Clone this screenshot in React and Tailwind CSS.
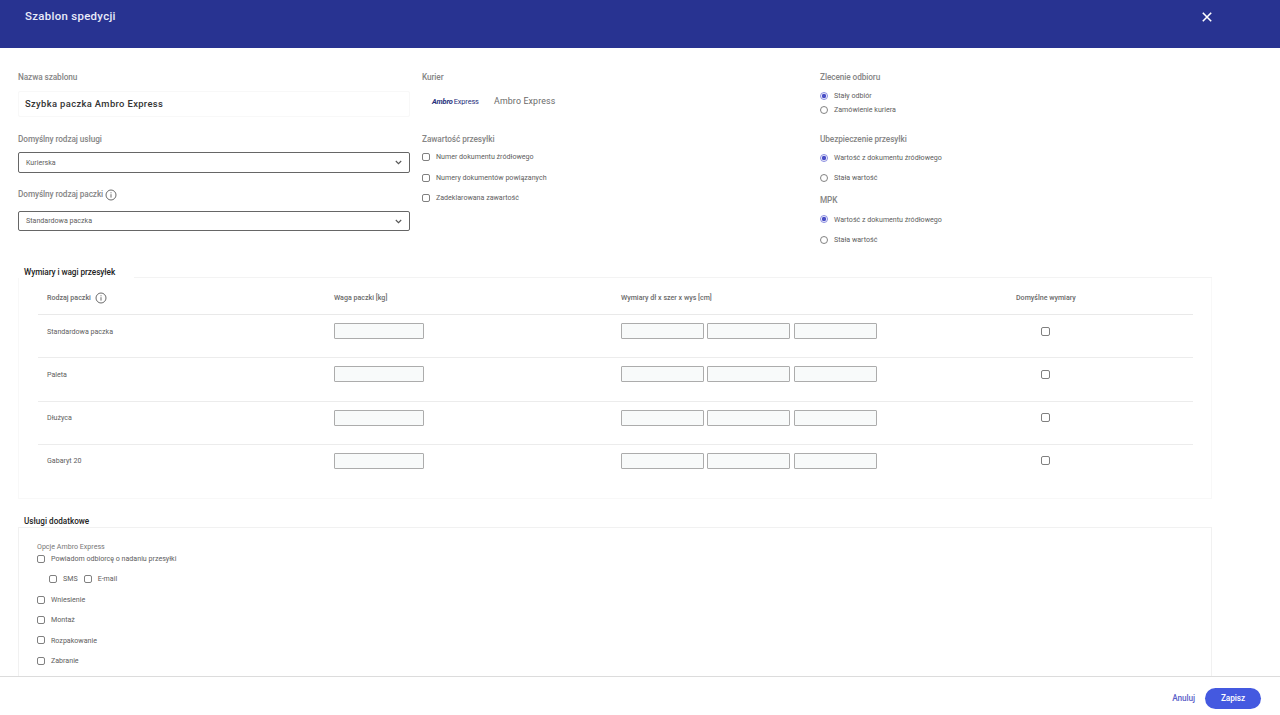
import React from "react";

const Check = ({ className = "size-2" }) => (
  <span className={`${className} shrink-0 rounded-[2px] border border-[#808080] bg-white`} />
);

const Radio = ({ on }) => (
  <svg className="size-2 shrink-0" viewBox="0 0 8 8">
    <circle cx="4" cy="4" r="3.5" fill="#fff" stroke={on ? "#7a7edb" : "#757575"} strokeWidth="0.9" />
    {on && <circle cx="4" cy="4" r="2.2" fill="#4a4fc6" />}
  </svg>
);

const Info = () => (
  <svg className="size-3 shrink-0" viewBox="0 0 12 12" fill="none" stroke="#5a5a5a">
    <circle cx="6" cy="6" r="5" strokeWidth="0.9" />
    <path d="M6 5.2V8.6M6 3.3V4.3" strokeWidth="0.9" />
  </svg>
);

const Label = ({ children, className = "" }) => (
  <div className={`flex h-[14px] items-center text-[8.25px] tracking-[-0.011em] font-medium text-[#858585] ${className}`}>{children}</div>
);

const Option = ({ radio, on, children, className = "h-[20.4px]" }) => (
  <label className={`flex items-center gap-1.5 text-[7.1px] text-[#606060] ${className}`}>
    {radio ? <Radio on={on} /> : <Check />}
    <span className="pt-px">{children}</span>
  </label>
);

const Select = ({ children, className }) => (
  <div className={`flex items-center justify-between rounded-[2px] border border-[#666] pr-[7px] pl-[7px] text-[7.1px] text-[#606060] ${className}`}>
    <span className="pt-px">{children}</span>
    <svg className="h-[5px] w-[7px]" viewBox="0 0 7 5" fill="none" stroke="#555" strokeWidth="1.1">
      <path d="M0.8 1L3.5 3.7L6.2 1" />
    </svg>
  </div>
);

const Field = ({ className }) => (
  <span className={`block h-4 rounded-[1px] border border-[#acacac] bg-[#f8fafa] ${className}`} />
);

const rows = ["Standardowa paczka", "Paleta", "Dłużyca", "Gabaryt 20"];
const columns = "grid grid-cols-[287px_287px_395px_1fr] pl-[9px]";

export default function App() {
  return (
    <div className="flex h-[715px] w-[1280px] flex-col overflow-hidden bg-white font-[Roboto,sans-serif] whitespace-nowrap">
      <header className="flex h-12 shrink-0 justify-between bg-[#283391] pr-[68px] pl-[25px] text-white">
        <h1 className="pt-[7px] text-[11.4px] leading-[18px] font-medium tracking-[0.028em] text-[#e9ebfa]">Szablon spedycji</h1>
        <svg className="mt-[12px] size-[10px]" viewBox="0 0 10 10" stroke="#fff" strokeWidth="1.6">
          <path d="M0.8 0.8L9.2 9.2M9.2 0.8L0.8 9.2" />
        </svg>
      </header>

      <main className="h-[628px] shrink-0 overflow-hidden pr-[68px] pl-[18px]">
        <div className="flex h-[218px] pt-[22px]">
          <section className="w-[392px]">
            <Label>Nazwa szablonu</Label>
            <div className="mt-[7px] flex h-[26px] items-center rounded-[2px] border border-[#f8f8f8] pl-1.5 text-[9.4px] font-medium tracking-[0.039em] text-[#333]">
              Szybka paczka Ambro Express
            </div>
            <Label className="mt-[15px]">Domyślny rodzaj usługi</Label>
            <Select className="mt-[6px] h-[21px]">Kurierska</Select>
            <Label className="mt-[15px] gap-0.5">
              <span className="pb-px">Domyślny rodzaj paczki</span> <Info />
            </Label>
            <Select className="mt-[9px] h-5">Standardowa paczka</Select>
          </section>

          <section className="ml-3 w-[398px]">
            <Label>Kurier</Label>
            <div className="mt-[7px] flex h-5 items-center pt-px pl-[10px]">
              <span className="w-[62px] text-[7.4px] tracking-[-0.02em] text-[#26307c]"><b className="italic">Ambro</b><span className="ml-px">Express</span></span>
              <span className="text-[8.8px] tracking-[0.018em] text-[#6a6a6a]">Ambro Express</span>
            </div>
            <Label className="mt-[21px] mb-px">Zawartość przesyłki</Label>
            <Option>Numer dokumentu źródłowego</Option>
            <Option>Numery dokumentów powiązanych</Option>
            <Option>Zadeklarowana zawartość</Option>
          </section>

          <section>
            <Label className="mb-[5px]">Zlecenie odbioru</Label>
            <Option radio on className="h-[14px]">Stały odbiór</Option>
            <Option radio className="h-[14px]">Zamówienie kuriera</Option>
            <Label className="mt-[15px] mb-[1.4px]">Ubezpieczenie przesyłki</Label>
            <Option radio on>Wartość z dokumentu źródłowego</Option>
            <Option radio>Stała wartość</Option>
            <Label className="mt-[5px] mb-[2px]">MPK</Label>
            <Option radio on>Wartość z dokumentu źródłowego</Option>
            <Option radio>Stała wartość</Option>
          </section>
        </div>

        <section>
          <div className="flex h-[12px] items-center">
            <h2 className="w-[116px] pl-1.5 text-[8.25px] font-medium tracking-[-0.01em] text-[#222]">Wymiary i wagi przesyłek</h2>
            <span className="mt-[11px] h-px flex-1 bg-[#f3f3f3]" />
          </div>
          <div className="h-[221px] border-x border-b border-[#f8f8f8] pr-[18px] pl-[19px]">
            <div className={`${columns} h-[37px] items-center border-b border-[#e9e9e9] pt-[4px] text-[7.08px] font-medium text-[#6a6a6a]`}>
              <span className="flex items-center gap-[4px]">Rodzaj paczki <Info /></span>
              <span>Waga paczki [kg]</span>
              <span>Wymiary dł x szer x wys [cm]</span>
              <span>Domyślne wymiary</span>
            </div>
            {rows.map((row) => (
              <div key={row} className={`${columns} h-[43.3px] items-start border-b border-[#ececec] pt-2 last:border-0`}>
                <span className="pt-[0.5px] text-[7.1px] leading-4 text-[#606060]">{row}</span>
                <Field className="w-[90px]" />
                <span className="flex gap-[3.4px]">
                  <Field className="w-[83px]" />
                  <Field className="w-[83px]" />
                  <Field className="w-[83px]" />
                </span>
                <span className="flex h-4 items-center pl-[25px]"><Check className="size-[9px]" /></span>
              </div>
            ))}
          </div>
        </section>

        <section className="pt-[16px]">
          <h2 className="h-[12px] pl-1.5 text-[8.15px] leading-[12px] font-medium text-[#222]">Usługi dodatkowe</h2>
          <div className="h-[150px] border border-b-0 border-[#f1f1f1] pt-[13px] pl-[18px]">
            <div className="h-3 text-[7.1px] leading-3 text-[#777]">Opcje Ambro Express</div>
            <Option className="h-3">Powiadom odbiorcę o nadaniu przesyłki</Option>
            <div className="mt-1 flex gap-1.5 pl-3">
              <Option>SMS</Option>
              <Option>E-mail</Option>
            </div>
            <Option>Wniesienie</Option>
            <Option>Montaż</Option>
            <Option>Rozpakowanie</Option>
            <Option>Zabranie</Option>
          </div>
        </section>
      </main>

      <footer className="flex h-[39px] shrink-0 items-start justify-end gap-[10px] border-t border-[#dcdcdc] bg-white pt-[11px] pr-[19px] text-[8.25px] tracking-[-0.01em] font-medium">
        <button className="h-[21px] text-[#5a60c8]">Anuluj</button>
        <button className="h-[21px] w-[56px] rounded-full bg-[#4459e0] text-white">Zapisz</button>
      </footer>
    </div>
  );
}
